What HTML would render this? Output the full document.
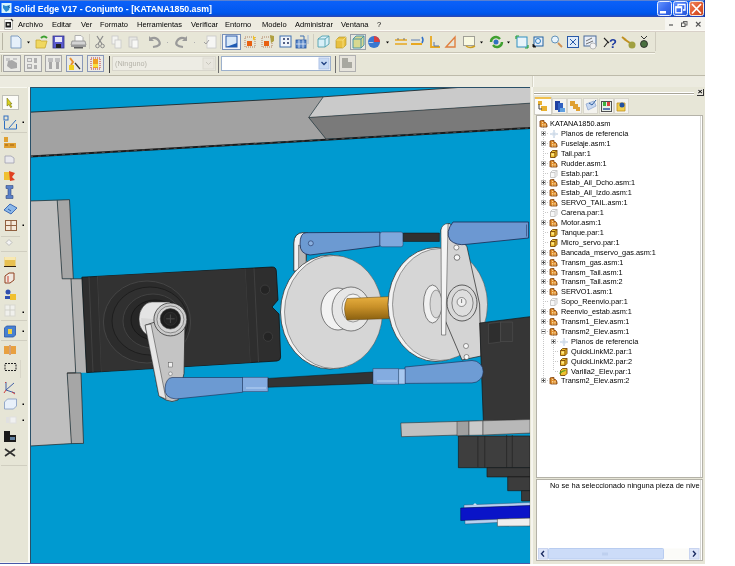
<!DOCTYPE html>
<html><head><meta charset="utf-8">
<style>
*{margin:0;padding:0;box-sizing:border-box}
html,body{width:735px;height:566px;overflow:hidden;background:#fff;font-family:"Liberation Sans",sans-serif}
.a{position:absolute}
#win{filter:blur(0.35px);position:absolute;left:0;top:0;width:705px;height:564px;background:#E7E6D7;overflow:hidden}
#title{left:0;top:0;width:705px;height:17px;background:linear-gradient(#5A80D0 0,#5A80D0 1px,#0A62F8 1px,#0A5EF6 4px,#0058F0 12px,#0050E0 15px,#2848B8 16px,#2848B8 17px)}
#title .t{left:14px;top:4px;color:#fff;font-weight:bold;font-size:8.75px;white-space:nowrap;line-height:10px}
#menu{left:0;top:17px;width:705px;height:14px;background:#EDEBE0}
#menu span{position:absolute;top:3px;font-size:7.5px;line-height:9px;color:#000;white-space:nowrap}
.btn{position:absolute;border:1px solid #A6A6A6;background:#EAEAE6}
.hb{position:absolute;border:1px solid #8AA0C0;background:#F4F2EA}
.sep{position:absolute;width:1px;background:#C0BDB0}
.tr{position:absolute;font-size:7.33px;line-height:9px;white-space:nowrap;color:#000}
</style></head><body>
<div id="win">
  <div id="title" class="a">
    <svg class="a" style="left:1px;top:3px" width="11" height="10" viewBox="0 0 11 10"><rect x="0.5" y="0" width="10" height="10" fill="#D8F4FC"/><path d="M2 2l3 1 4-1-1 5-3 2-3-4z" fill="#2A8AD0"/><path d="M7 3l1.5 2" stroke="#1A5A80" stroke-width="1"/></svg>
    <div class="a t">Solid Edge V17 - Conjunto - [KATANA1850.asm]</div>
    <svg class="a" style="left:654px;top:0" width="51" height="17" viewBox="654 0 51 17">
      <defs><linearGradient id="bb" x1="0" y1="0" x2="1" y2="1"><stop offset="0" stop-color="#6A98FF"/><stop offset="0.5" stop-color="#3A6CF0"/><stop offset="1" stop-color="#2858D8"/></linearGradient>
      <linearGradient id="rb" x1="0" y1="0" x2="1" y2="1"><stop offset="0" stop-color="#F08860"/><stop offset="0.5" stop-color="#E25A30"/><stop offset="1" stop-color="#C84018"/></linearGradient></defs>
      <rect x="657.5" y="1.5" width="14" height="14" rx="2" fill="url(#bb)" stroke="#E8F0FF"/>
      <rect x="660" y="11" width="6" height="2.5" fill="#fff"/>
      <rect x="673.5" y="1.5" width="14" height="14" rx="2" fill="url(#bb)" stroke="#E8F0FF"/>
      <path d="M678 6V4.5H685V10H683" stroke="#fff" stroke-width="1.3" fill="none"/>
      <rect x="675.8" y="6.8" width="5.8" height="6" fill="none" stroke="#fff" stroke-width="1.3"/>
      <path d="M675.8 7.5h5.8" stroke="#fff" stroke-width="1.6"/>
      <rect x="689.5" y="1.5" width="14" height="14" rx="2" fill="url(#rb)" stroke="#F4E8E0"/>
      <path d="M692 4L701 13.5M701 4L692 13.5" stroke="#fff" stroke-width="1.8"/>
      <rect x="704" y="0" width="1" height="17" fill="#1838A0"/>
    </svg>
  </div>
  <div id="menu" class="a">
    <svg class="a" style="left:3px;top:1px" width="11" height="13" viewBox="3 18 11 13"><path d="M4.5 19.5h7l1 1v9h-8z" fill="#FAFAF8" stroke="#B8B8B0"/><rect x="5.5" y="22" width="5.5" height="5.5" fill="#1A1A1A"/><rect x="7" y="23.5" width="2.5" height="2" fill="#E8E8E0"/><path d="M11 19l2 2" stroke="#333" stroke-width="1.2"/></svg>
    <span style="left:18px">Archivo</span>
    <span style="left:52px">Editar</span>
    <span style="left:81px">Ver</span>
    <span style="left:100px">Formato</span>
    <span style="left:137px">Herramientas</span>
    <span style="left:191px">Verificar</span>
    <span style="left:225px">Entorno</span>
    <span style="left:262px">Modelo</span>
    <span style="left:295px">Administrar</span>
    <span style="left:341px">Ventana</span>
    <span style="left:377px">?</span>
    <div class="a" style="left:665px;top:0;width:40px;height:14px;background:#F6F5F0"></div>
    <svg class="a" style="left:665px;top:0" width="40" height="14" viewBox="665 17 40 14">
      <path d="M669 25h4" stroke="#555" stroke-width="1.2"/>
      <rect x="683.5" y="21.5" width="3.5" height="3.5" fill="none" stroke="#666"/>
      <rect x="681.5" y="23" width="3.5" height="3.5" fill="#F6F5F0" stroke="#555"/>
      <path d="M696 22l4.5 4.5M700.5 22l-4.5 4.5" stroke="#555" stroke-width="1.1"/>
    </svg>
  </div>
  <!-- toolbar rows -->
  <div class="a" style="left:0;top:30px;width:705px;height:1px;background:#FBFAF4"></div>
  <div class="a" style="left:0;top:31px;width:705px;height:1px;background:#D8D0C8"></div>
  <div class="a" style="left:0;top:52px;width:655px;height:1px;background:#C8C5B6"></div>
  <div class="a" style="left:0;top:53px;width:655px;height:1px;background:#FAF9F0"></div>
  <div class="a" style="left:655px;top:32px;width:1px;height:19px;background:#CFCCBE"></div>
  <div class="a" style="left:0;top:75px;width:705px;height:1px;background:#BDBAAA"></div>
  <div class="a" style="left:0;top:76px;width:705px;height:11px;background:#ECEBE0"></div>
  <div class="a" style="left:533px;top:76px;width:1px;height:11px;background:#FAFAF4"></div>
  <div class="a" style="left:532px;top:76px;width:1px;height:11px;background:#D8D6C8"></div>
  <div class="a" style="left:2px;top:33px;width:1px;height:17px;background:#B8B5A5"></div>
  <svg class="a" style="left:0;top:31px" width="660" height="21" viewBox="0 31 660 21">
    <!-- new -->
    <path d="M11 36h7l3 3v9h-10z" fill="#E6F0FA" stroke="#7E9CC0" stroke-width="1"/>
    <path d="M27 41.5h3l-1.5 2z" fill="#000"/>
    <!-- open -->
    <path d="M36 40h4l1 1h6l-2 7h-9z" fill="#F0D860" stroke="#C8A830" stroke-width="0.8"/>
    <path d="M41 38q3-3 6 0" stroke="#3CA030" stroke-width="2" fill="none"/>
    <!-- save -->
    <rect x="53" y="36" width="11" height="12" fill="#5A5ACC" stroke="#33338A" stroke-width="0.8"/>
    <rect x="55" y="37" width="7" height="5" fill="#E8E8F8"/>
    <rect x="56" y="44" width="5" height="4" fill="#222"/>
    <!-- print -->
    <path d="M75 35.5h6l2 2v4h-8z" fill="#FAFAFA" stroke="#A0A0A0" stroke-width="0.8"/>
    <path d="M72 41h13l1 4h-15z" fill="#D4D4D4" stroke="#8A8A8A" stroke-width="0.8"/>
    <path d="M71 45h15v2h-15z" fill="#9A9A9A"/>
    <rect x="74" y="47" width="9" height="1.5" fill="#606060"/>
    <rect x="89" y="34" width="1" height="15" fill="#D0CDC0"/>
    <!-- cut -->
    <path d="M97 36l5 8M103 36l-5 8" stroke="#8A8A8A" stroke-width="1.2"/>
    <circle cx="97.5" cy="46" r="1.8" fill="none" stroke="#8A8A8A"/>
    <circle cx="102.5" cy="46" r="1.8" fill="none" stroke="#8A8A8A"/>
    <!-- copy -->
    <rect x="112" y="36" width="6" height="8" fill="#F4F4F0" stroke="#C8C8C8" stroke-width="0.8"/>
    <rect x="115" y="40" width="6" height="8" fill="#F4F4F0" stroke="#C8C8C8" stroke-width="0.8"/>
    <!-- paste -->
    <rect x="129" y="37" width="8" height="10" fill="#E8E8E4" stroke="#C0C0C0" stroke-width="0.8"/>
    <rect x="132" y="40" width="6" height="8" fill="#F8F8F6" stroke="#C8C8C8" stroke-width="0.8"/>
    <!-- undo -->
    <path d="M150 39q6-3 9 2t-6 6" stroke="#9A9A9A" stroke-width="2.2" fill="none"/>
    <path d="M149 36v5h5z" fill="#9A9A9A"/>
    <rect x="167" y="42" width="1" height="1" fill="#B0B0B0"/>
    <!-- redo -->
    <path d="M186 39q-6-3-9 2t6 6" stroke="#9A9A9A" stroke-width="2.2" fill="none"/>
    <path d="M187 36v5h-5z" fill="#9A9A9A"/>
    <rect x="194" y="42" width="1" height="1" fill="#B0B0B0"/>
    <!-- doc check -->
    <rect x="207" y="36" width="9" height="12" fill="#F6F6F4" stroke="#C8C8C8" stroke-width="0.8"/>
    <path d="M204 42l2 2 3-4" stroke="#A0A0A0" fill="none"/>
    <rect x="220" y="34" width="1" height="15" fill="#D0CDC0"/>
    <!-- highlighted -->
    <rect x="222.5" y="34.5" width="18" height="15" fill="#F2F4F8" stroke="#7890B8"/>
    <rect x="226" y="36" width="11" height="11" fill="#D8E8F8" stroke="#2858A8" stroke-width="1"/>
    <path d="M226 47h11v-4z" fill="#1E5AB4"/>
    <!-- A -->
    <rect x="245" y="37" width="10" height="10" fill="none" stroke="#B08060" stroke-dasharray="1 1"/>
    <rect x="247" y="41" width="5" height="5" fill="#E86010"/>
    <path d="M253 35l1 2 2 0-1.5 1.5.5 2-2-1" fill="#F0C020"/>
    <!-- B -->
    <rect x="262" y="37" width="10" height="10" fill="none" stroke="#B08060" stroke-dasharray="1 1"/>
    <rect x="264" y="41" width="5" height="5" fill="#E86010"/>
    <path d="M270 35l4 1v5l-3 2z" fill="#B0A040"/>
    <!-- C -->
    <rect x="280" y="36" width="11" height="11" fill="#F0F4FA" stroke="#4070B0"/>
    <path d="M283 39h2M287 39h2M283 43h2M287 43h2" stroke="#203060" stroke-width="1.5"/>
    <!-- D -->
    <rect x="296" y="40" width="10" height="8" fill="#5A88C8" stroke="#2050A0" stroke-width="0.8"/>
    <path d="M299 40v8M303 40v8M296 44h10" stroke="#E8F0FA" stroke-width="0.8"/>
    <path d="M300 36h4v4" stroke="#4070B0" fill="none"/>
    <path d="M308 35v9" stroke="#A0B8D8"/>
    <rect x="313" y="34" width="1" height="15" fill="#D0CDC0"/>
    <!-- E -->
    <path d="M318 39l4-3h7v8l-4 3h-7z" fill="#D8F0F8" stroke="#50A0B0" stroke-width="0.9"/>
    <path d="M318 39h7v8M325 39l4-3" stroke="#50A0B0" fill="none" stroke-width="0.9"/>
    <!-- F -->
    <path d="M336 40l3-3h7v8l-3 3h-7z" fill="#E8C040" stroke="#B09020" stroke-width="0.6"/>
    <path d="M343 40v8M336 40h7l3-3" stroke="#FFF0A0" fill="none" stroke-width="0.6"/>
    <!-- highlighted cube -->
    <rect x="350.5" y="34.5" width="15" height="15" fill="#E8E8E0" stroke="#9AA0A8"/>
    <path d="M353 39l3-3h8v9l-3 3h-8z" fill="#D8D890" stroke="#4090A8" stroke-width="0.9"/>
    <path d="M353 39h8v9M361 39l3-3" stroke="#4090A8" fill="none" stroke-width="0.9"/>
    <!-- sphere -->
    <circle cx="374" cy="42" r="6" fill="#3A78D0"/>
    <path d="M374 36a6 6 0 0 1 6 6h-6z" fill="#D84040"/>
    <path d="M374 42a6 6 0 0 1-6 0z" fill="#E0E8F8"/>
    <path d="M386 41.5h3l-1.5 2z" fill="#000"/>
    <!-- dim1 -->
    <path d="M395 40h12M395 44h12" stroke="#E8A820" stroke-width="1.6"/>
    <path d="M398 38v2M404 38v2" stroke="#777" />
    <!-- dim2 -->
    <path d="M411 44h11" stroke="#E8A820" stroke-width="2"/>
    <path d="M411 40h9" stroke="#6080B0" stroke-width="1"/>
    <path d="M422 37q2 3 0 6" stroke="#3070C8" stroke-width="1.5" fill="none"/>
    <!-- L -->
    <path d="M431 36v11h9" stroke="#E8A820" stroke-width="1.8" fill="none"/>
    <path d="M434 42v4h5" stroke="#5878A8" fill="none"/>
    <!-- triangle -->
    <path d="M446 47l9-10v10z" fill="none" stroke="#E08040" stroke-width="1.4"/>
    <!-- dotted -->
    <rect x="463.5" y="36.5" width="11" height="9" fill="#F8F8E0" stroke="#505050" stroke-dasharray="1 1"/>
    <path d="M466 46q4 3 9 0" stroke="#D0A020" stroke-width="1.5" fill="none"/>
    <path d="M480 41.5h3l-1.5 2z" fill="#000"/>
    <!-- rotate -->
    <path d="M491 42a5 5 0 0 1 9-3" stroke="#40A030" stroke-width="2.4" fill="none"/>
    <path d="M502 42a5 5 0 0 1-9 3" stroke="#40A030" stroke-width="2.4" fill="none"/>
    <circle cx="496" cy="42" r="2.5" fill="#3070C0"/>
    <path d="M507 41.5h3l-1.5 2z" fill="#000"/>
    <!-- fit -->
    <rect x="517" y="37" width="10" height="10" fill="#E8F4FA" stroke="#3090C0"/>
    <path d="M516 36l3 0M516 36v3M528 48h-3M528 48v-3" stroke="#20A040" stroke-width="1.2"/>
    <!-- zoom area -->
    <rect x="534" y="37" width="9" height="9" fill="#E8F0F8" stroke="#2060A0"/>
    <circle cx="538" cy="41" r="2.5" fill="none" stroke="#3080C0"/>
    <path d="M533 44v3h3" stroke="#222"/>
    <!-- zoom -->
    <circle cx="555" cy="39.5" r="3.5" fill="#E8F4FC" stroke="#6090B8"/>
    <path d="M558 43l4 4" stroke="#D09050" stroke-width="1.8"/>
    <!-- zoom all -->
    <rect x="567.5" y="36.5" width="11" height="11" fill="#E0ECF8" stroke="#2A5AA8"/>
    <path d="M570 39l6 6M576 39l-6 6" stroke="#2A5AA8"/>
    <!-- view -->
    <rect x="584" y="36" width="12" height="10" fill="#E8EEF6" stroke="#4A6A9A"/>
    <path d="M586 41l6-3M586 44l7-3" stroke="#707070"/>
    <circle cx="593" cy="46" r="3" fill="#F4F4F4" stroke="#999" stroke-width="0.6"/>
    <!-- help -->
    <path d="M604 38l5 5M604 47l4-5" stroke="#222" stroke-width="1.1"/>
    <text x="609" y="48" font-family="Liberation Sans" font-weight="bold" font-size="13" fill="#1E3CA0">?</text>
    <!-- tool -->
    <path d="M622 37l4 3M624 39l6 4" stroke="#C09020" stroke-width="2"/>
    <circle cx="632" cy="45" r="3.5" fill="#A0A040"/>
    <!-- last -->
    <path d="M641 36l3 3 3-3" stroke="#333" fill="none"/>
    <circle cx="644" cy="44" r="3.5" fill="#4A7040" stroke="#222" stroke-width="0.8"/>
  </svg>
  <!-- row 2 -->
  <div class="a" style="left:1px;top:55px;width:1px;height:17px;background:#B8B5A5"></div>
  <div class="btn" style="left:3px;top:55px;width:18px;height:17px"></div>
  <div class="btn" style="left:24px;top:55px;width:18px;height:17px"></div>
  <div class="btn" style="left:45px;top:55px;width:17px;height:17px"></div>
  <div class="btn" style="left:66px;top:55px;width:17px;height:17px;border-color:#8A98B8"></div>
  <div class="btn" style="left:87px;top:55px;width:17px;height:17px;border-color:#8A98B8"></div>
  <svg class="a" style="left:0;top:52px" width="360" height="23" viewBox="0 52 360 23">
    <path d="M6 58h4v3h-4zM13 58h4v2h-4z" fill="#C8C8C8"/>
    <path d="M8 61l4-1 5 3v5l-6 1-4-3z" fill="#A8A8A8"/>
    <path d="M27 58h5v4h-5zM34 58h3v5h-3zM27 64h5v5h-5zM34 65h3v4h-3z" fill="#B0B0B0"/>
    <path d="M28 59h3v2h-3zM28 65h3v2h-3z" fill="#E4E4E4"/>
    <path d="M48 58h5v4h-5zM55 58h5v4h-5z" fill="#C0C0C0"/>
    <path d="M49 62h3v7h-3zM56 62h3v7h-3z" fill="#A8A8A8"/>
    <path d="M70 58l3 4-2 3" stroke="#E89030" stroke-width="2" fill="none"/>
    <rect x="69" y="65" width="5" height="5" fill="#F0D020"/>
    <path d="M75 63l5 6" stroke="#333" stroke-width="1.2"/>
    <rect x="91" y="58" width="9" height="11" fill="none" stroke="#C03030" stroke-dasharray="1 1"/>
    <rect x="93" y="59" width="5" height="9" fill="#F0A020"/>
    <rect x="93" y="64" width="5" height="3" fill="#F8E040"/>
    <rect x="109" y="56" width="1" height="17" fill="#404040"/>
    <!-- combo disabled -->
    <rect x="112.5" y="56.5" width="103" height="14" fill="#EDECE4" stroke="#D8D6CC"/>
    <text x="115" y="66" font-family="Liberation Sans" font-size="7.3" fill="#B4B2A8">(Ninguno)</text>
    <rect x="203" y="58" width="11" height="11" fill="#E8E6DE" stroke="#DCDAD0"/>
    <path d="M206 62l2.5 2.5 2.5-2.5" stroke="#C8C6BC" fill="none"/>
    <rect x="218" y="56" width="1" height="17" fill="#707070"/>
    <!-- combo white -->
    <rect x="221.5" y="56.5" width="109" height="14" fill="#FFFFFF" stroke="#9CB0CC"/>
    <rect x="319" y="58" width="10" height="11" fill="#C8DAF4" stroke="#B0C4E8"/>
    <path d="M321.5 62l2.5 2.5 2.5-2.5" stroke="#204080" stroke-width="1.3" fill="none"/>
    <rect x="335" y="56" width="1" height="17" fill="#707070"/>
    <rect x="339.5" y="55.5" width="16" height="16" fill="#E6E4DC" stroke="#B0B0B0"/>
    <path d="M342 58h6v4h4v6h-10z" fill="#A8A8A0"/>
  </svg>


  <!-- left toolbar -->
  <div class="a" style="left:0;top:87px;width:28px;height:476px;background:#E6E5D6"></div>
  <div class="a" style="left:28px;top:87px;width:2px;height:476px;background:#FAFAF4"></div>
  <div class="a" style="left:0;top:562px;width:28px;height:1px;background:#F4F4F0"></div>
  <div class="a" style="left:0;top:563px;width:705px;height:1px;background:#4858A8"></div>
  <svg class="a" style="left:0;top:87px" width="28" height="476" viewBox="0 87 28 476">
    <path d="M0 87.5h27" stroke="#F8F8F0"/>
    <rect x="2.5" y="95.5" width="16" height="14" fill="#FCFCF8" stroke="#C0C0B8"/>
    <path d="M7 98l5 6-2 0 2 3-1.5 .5-1.5-3-2 1.5z" fill="#D8D020" stroke="#606000" stroke-width="0.5"/>
    <rect x="4" y="116" width="4" height="4" fill="none" stroke="#3070C0"/>
    <path d="M4.5 121v8h12v-5M9 128l7-8" stroke="#3070C0" stroke-width="1" fill="none"/>
    <rect x="22.5" y="121.5" width="1.5" height="1.5" fill="#000"/>
    <path d="M1 132.5h26" stroke="#D0CEC0"/>
    <path d="M4 137h4v5h-4zM4 143h12v5h-12z" fill="#E0A030"/>
    <path d="M5 145h3M10 145h4" stroke="#A06010" stroke-width="1"/>
    <path d="M5 156h6l3 2v5h-9z" fill="#E8E8EC" stroke="#A0A0B0" stroke-width="0.8"/>
    <path d="M4 172h7v8h-7z" fill="#F0C030"/>
    <path d="M9 171l6 2-3 4 3 3-5 1z" fill="#E04020"/>
    <path d="M6 185.5h7v3h-2v7h2v3h-7v-3h2v-7h-2z" fill="#5A80C8" stroke="#304880" stroke-width="0.6"/>
    <path d="M4 210l6-6 7 4-6 6z" fill="#8CB8E8" stroke="#3060B0" stroke-width="0.9"/>
    <path d="M8 209l3 2" stroke="#3060B0"/>
    <rect x="5.5" y="220.5" width="11" height="10" fill="#F4E8D8" stroke="#906040"/>
    <path d="M11 220.5v10M5.5 225.5h11" stroke="#906040"/>
    <rect x="22.5" y="224.5" width="1.5" height="1.5" fill="#000"/>
    <path d="M1 236.5h19" stroke="#D0CEC0"/>
    <path d="M6 242.5l3-3 3 3-3 3z" fill="#F4F4F4" stroke="#B0B0B0" stroke-width="0.8"/>
    <path d="M1 251.5h26" stroke="#D0CEC0"/>
    <rect x="4.5" y="257" width="11" height="9" fill="#E8C050"/>
    <rect x="4.5" y="257" width="11" height="3" fill="#F8E8B0"/>
    <path d="M4 266.5h12" stroke="#302010" stroke-width="1"/>
    <path d="M5 276l4-3h5v7l-4 3h-5z" fill="#F0E8E0" stroke="#904020" stroke-width="1"/>
    <path d="M8 276v6" stroke="#D04030"/>
    <circle cx="8" cy="292" r="2.5" fill="#3050B0"/>
    <path d="M5 296h5v3h-5z" fill="#3050B0"/>
    <rect x="10" y="294" width="6" height="6" fill="#F0C030"/>
    <rect x="5" y="305" width="10" height="11" fill="#F0F0EC" stroke="#D8D8D0"/>
    <path d="M10 305v11M5 310h10" stroke="#D0D0C8"/>
    <rect x="22.5" y="311.5" width="1.5" height="1.5" fill="#000"/>
    <path d="M1 320.5h26" stroke="#D0CEC0"/>
    <path d="M4.5 328l2-2h9v9l-2 2h-9z" fill="#4880D0" stroke="#2858A8" stroke-width="0.8"/>
    <rect x="8" y="329" width="4" height="5" fill="#F0D040"/>
    <rect x="22.5" y="330.5" width="1.5" height="1.5" fill="#000"/>
    <path d="M1 340.5h26" stroke="#D0CEC0"/>
    <path d="M4 346h5v8h-5zM11 346h5v8h-5z" fill="#E8A040"/>
    <path d="M10 345v10" stroke="#C06020"/>
    <rect x="5" y="363.5" width="11" height="7" fill="none" stroke="#202020" stroke-dasharray="2 1" stroke-width="1"/>
    <path d="M20.5 360v18" stroke="#D8D6C8"/>
    <path d="M6 382v8l9 3M6 390l8-7" stroke="#3050A0" stroke-width="0.9" fill="none"/>
    <path d="M6 390l-2 3M12 392l3 2M6 382l-1 1" stroke="#D04040" stroke-width="1"/>
    <path d="M4.5 402l3-3h9v7l-3 3h-9z" fill="#E8F0FA" stroke="#8098C0" stroke-width="0.8"/>
    <rect x="22.5" y="403.5" width="1.5" height="1.5" fill="#000"/>
    <rect x="6" y="417" width="3" height="6" fill="#E0E0E0"/>
    <rect x="10" y="417" width="6" height="6" fill="#F0F0F0" stroke="#E0E0E0"/>
    <rect x="22.5" y="419.5" width="1.5" height="1.5" fill="#000"/>
    <path d="M4 431h6v4h6v7h-12z" fill="#1A1A1A"/>
    <rect x="10" y="437" width="5" height="3" fill="#6080A0"/>
    <path d="M5 449l10 7M5 456l10-7" stroke="#303030" stroke-width="1.6"/>
    <path d="M1 465.5h26" stroke="#D0CEC0"/>
  </svg>
  <!-- viewport -->
  <svg class="a" style="left:30px;top:87px" width="500" height="476" viewBox="30 87 500 476">
    <rect x="30" y="87" width="500" height="476" fill="#009AD0"/>
    <!-- top beam -->
    <polygon points="30,112.2 323.3,96.8 308.7,117.5 326,139 30,156.4" fill="#A2A2A2"/>
    <polygon points="323.3,96.8 465,87 530,87 530,103.2 308.7,117.5" fill="#CACACA"/>
    <polygon points="308.7,117.5 530,103.2 530,127.7 326,139" fill="#7A7A7A"/>
    <path d="M30 112.2L323.3 96.8L465 87" stroke="#1A1A1A" stroke-width="0.8" fill="none"/>
    <path d="M30 156.6L530 128" stroke="#1A1A1A" stroke-width="2" fill="none"/>
    <path d="M30 156.6L530 128" stroke="#707070" stroke-width="0.6" stroke-dasharray="3 5" fill="none"/>
    <path d="M323.3 96.8L308.7 117.5L326 139M308.7 117.5L530 103.2" stroke="#303030" stroke-width="0.7" fill="none"/>
    <!-- left structure -->
    <polygon points="30,201 57.2,200.3 62.2,278.8 71,278.8 75.7,372.8 67.2,373 71.4,443.6 30,446" fill="#BFBFBF"/>
    <polygon points="57.2,200.3 69.5,199.7 73.3,278.8 62.2,278.8" fill="#A6A6A6"/>
    <polygon points="71,278.8 82,278.8 86.6,372.8 75.7,372.8" fill="#B2B2B2"/>
    <polygon points="67.2,373 81,373 83.5,443.4 71.4,443.6" fill="#A6A6A6"/>
    <path d="M30 201L69.5 199.7L73.3 278.8M57.2 200.3L62.2 278.8H82M71 278.8L75.7 372.8L67.2 373L71.4 443.6L30 446M67.2 373H81L83.5 443.4L71.4 443.6" stroke="#222" stroke-width="0.7" fill="none"/>
    <!-- servo body -->
    <path d="M81.9 277.2L272 267Q276 266.9 276.3 271L278 300L272 307L279 314L280.6 357Q280.8 360.5 277 361L86.6 372.6Z" fill="#2E2E2E" stroke="#111" stroke-width="0.8"/>
    <path d="M89 276.8L93 372M97.6 276.3L101.5 371.5M245 268.7L250 362.5M254 268.3L258.5 362" stroke="#484848" stroke-width="0.7"/>
    <path d="M98 276.3L245 268.7L250 362.5L101.5 371.5Z" fill="#323232"/>
    <circle cx="265" cy="289.7" r="4.6" fill="#242424" stroke="#484848" stroke-width="0.6"/>
    <circle cx="268" cy="336.7" r="4.6" fill="#242424" stroke="#484848" stroke-width="0.6"/>
    <ellipse cx="147" cy="322" rx="43.6" ry="41" fill="#2C2C2C" stroke="#4A4A4A" stroke-width="0.8"/>
    <ellipse cx="150" cy="321" rx="38" ry="34" fill="#303030" stroke="#1A1A1A" stroke-width="0.8"/>
    <ellipse cx="153" cy="321" rx="30" ry="27" fill="#2A2A2A" stroke="#484848" stroke-width="0.8"/>
    <ellipse cx="155" cy="320" rx="24" ry="20" fill="#262626" stroke="#151515" stroke-width="0.8"/>
    <!-- hub cylinder -->
    <path d="M152 302H170V336H152A13 17 0 0 1 152 302Z" fill="#E4E4E4" stroke="#333" stroke-width="0.5"/>
    <path d="M141 318Q141 330 150 335H165V320Z" fill="#D0D0D0" opacity="0.6"/>
    <!-- horn arm -->
    <path d="M145.2 325.2L155 322L185 322L184 373.5L178 400Q172 403 166 400L159 396Z" fill="#C4C4C4" stroke="#222" stroke-width="0.7"/>
    <path d="M145.2 325.2L151 324L166 399L159 396Z" fill="#E6E6E6" stroke="#333" stroke-width="0.5"/>
    <rect x="168.7" y="372" width="3.5" height="3.5" rx="1.5" fill="#F0F0F0" stroke="#444" stroke-width="0.4"/>
    <circle cx="170.4" cy="319.4" r="16.5" fill="#CACACA" stroke="#222" stroke-width="0.7"/>
    <circle cx="170.4" cy="319.4" r="13.5" fill="#D4D4D4" stroke="#555" stroke-width="0.6"/>
    <circle cx="170.4" cy="318.8" r="10.2" fill="#1E1E1E" stroke="#444" stroke-width="0.6"/>
    <circle cx="170.4" cy="318.8" r="6.5" fill="#242424" stroke="#3A3A3A" stroke-width="0.5"/>
    <path d="M170.4 314.5v8.5M166.2 318.8h8.5" stroke="#4A4A4A" stroke-width="1"/>
    <rect x="168.7" y="362.8" width="3.5" height="4.2" fill="#F0F0F0" stroke="#444" stroke-width="0.4"/>
    <!-- lower link left -->
    <path d="M172 377.5L242.7 377.5L242.7 392.2L176 399Q164 398 165 388Q166 378 172 377.5Z" fill="#6C9AD2" stroke="#1A2A50" stroke-width="0.6"/>
    <rect x="242.7" y="377.2" width="25.3" height="14.5" fill="#84ACE0" stroke="#2A3A60" stroke-width="0.5"/>
    <path d="M246 388h20" stroke="#B8D4F4" stroke-width="1"/>
    <polygon points="268,378.4 372.9,372 372.9,383.4 268,387.3" fill="#333" stroke="#111" stroke-width="0.5"/>
    <!-- left bracket -->
    <path d="M293.8 271V243Q294 233 303.3 232.5L308 233L306 262L298.6 271Z" fill="#F2F2F2" stroke="#222" stroke-width="0.8"/>
    <path d="M298.6 271V245L306 248V262Z" fill="#B8B8B8" stroke="#333" stroke-width="0.5"/>
    <!-- left pulley -->
    <ellipse cx="330" cy="312" rx="49.5" ry="57" fill="#F2F2F2" stroke="#222" stroke-width="0.7"/>
    <ellipse cx="333.5" cy="312" rx="49" ry="56.5" fill="#D6D6D6" stroke="#444" stroke-width="0.5"/>
    <!-- hub left -->
    <ellipse cx="338" cy="309" rx="17" ry="21" fill="#F2F2F2" stroke="#333" stroke-width="0.6"/>
    <ellipse cx="351" cy="309" rx="19" ry="22" fill="#E6E6E6" stroke="#333" stroke-width="0.6"/>
    <ellipse cx="353" cy="308" rx="11" ry="14" fill="#F6F6F6" stroke="#555" stroke-width="0.6"/>
    <!-- brass shaft -->
    <defs>
      <linearGradient id="brass" x1="0" y1="0" x2="0" y2="1">
        <stop offset="0" stop-color="#E8B040"/><stop offset="0.45" stop-color="#C89028"/><stop offset="1" stop-color="#8A6010"/>
      </linearGradient>
    </defs>
    <path d="M347 298.5L392 296.5V318.5L347 320Q342 309 347 298.5Z" fill="url(#brass)" stroke="#5A4010" stroke-width="0.5"/>
    <!-- top link left -->
    <path d="M306 232.7L380 232.2L380 246L310 255Q300 254 300 244Q300 233 306 232.7Z" fill="#6C9AD2" stroke="#1A2A50" stroke-width="0.8"/>
    <circle cx="310.8" cy="243.3" r="2.5" fill="#8AB0E0" stroke="#203060" stroke-width="0.6"/>
    <rect x="380" y="232" width="23" height="14.8" rx="2" fill="#80A8DC" stroke="#2A3A60" stroke-width="0.5"/>
    <polygon points="403.3,233 439.4,233 439.4,241.5 403.3,241.5" fill="#303030" stroke="#111" stroke-width="0.5"/>
    <!-- right pulley -->
    <ellipse cx="436" cy="304.5" rx="48" ry="57" fill="#F2F2F2" stroke="#222" stroke-width="0.7"/>
    <ellipse cx="440" cy="304.5" rx="47.5" ry="56" fill="#D6D6D6" stroke="#444" stroke-width="0.5"/>
    <ellipse cx="432.5" cy="304" rx="9" ry="19" fill="#F0F0F0" stroke="#333" stroke-width="0.6"/>
    <ellipse cx="436" cy="304" rx="6" ry="14" fill="#D8D8D8" stroke="#555" stroke-width="0.5"/>
    <!-- right lever -->
    <path d="M441 230Q443 223.5 450 223.5L467 246.8L479.6 304L481 356L462 360L445 320Z" fill="#D4D4D4" stroke="#222" stroke-width="0.7"/>
    <path d="M441 230Q442 224 448 223.5L445.7 335L441.5 335Z" fill="#F4F4F4" stroke="#333" stroke-width="0.5"/>
    <circle cx="456.4" cy="247.5" r="2.5" fill="#F8F8F8" stroke="#333" stroke-width="0.5"/>
    <circle cx="457" cy="257.5" r="2.8" fill="#F8F8F8" stroke="#333" stroke-width="0.6"/>
    <ellipse cx="462" cy="303" rx="15" ry="18" fill="#D8D8D8" stroke="#222" stroke-width="0.7"/>
    <ellipse cx="462.5" cy="303" rx="10.6" ry="13.4" fill="#DEDEDE" stroke="#444" stroke-width="0.6"/>
    <circle cx="461.6" cy="302" r="4.5" fill="#F0F0F0" stroke="#333" stroke-width="0.5"/>
    <path d="M461.6 299v4" stroke="#333" stroke-width="0.6"/>
    <circle cx="466" cy="346" r="2.5" fill="#F8F8F8" stroke="#333" stroke-width="0.5"/>
    <circle cx="466.5" cy="357" r="2.5" fill="#F8F8F8" stroke="#333" stroke-width="0.5"/>
    <!-- top right arm -->
    <path d="M453 222L528.6 222V238L467 244.3Q456 246 450 240Q445 232 453 222Z" fill="#6C98D2" stroke="#1A2A50" stroke-width="0.8"/>
    <path d="M526.5 224.5v12" stroke="#2A3A60" stroke-width="0.6"/>
    <!-- right dark block -->
    <path d="M479.7 323L530 316.7V425H483.5Z" fill="#363636"/>
    <path d="M530 316.7L479.7 323L483.5 425" fill="none" stroke="#151515" stroke-width="0.7"/>
    <path d="M458.4 436H530V467.7H458.4Z" fill="#3E3E3E" stroke="#1A1A1A" stroke-width="0.7"/>
    <path d="M477.9 436.5V467M484.8 436V467.5M506.6 435V467.5M512.3 435V467.5" stroke="#222" stroke-width="0.7"/>
    <path d="M487 467.7H530V476.9H487Z" fill="#3A3A3A" stroke="#1A1A1A" stroke-width="0.7"/>
    <path d="M507.7 476.9H530V490.7H507.7Z" fill="#3C3C3C" stroke="#1A1A1A" stroke-width="0.7"/>
    <path d="M521.5 490.7H530V501H521.6Z" fill="#3A3A3A" stroke="#1A1A1A" stroke-width="0.7"/>
    <path d="M488.6 323.5l12-1.5v20l-12 1.5z" fill="#2E2E2E" stroke="#555" stroke-width="0.5"/>
    <path d="M500.6 322h12v19.5h-12z" fill="#383838" stroke="#555" stroke-width="0.5"/>
    <!-- gray rod -->
    <polygon points="400.8,423 530,419.5 530,433 401.5,436.7" fill="#C0C0C0" stroke="#333" stroke-width="0.6"/>
    <polygon points="457,421.5 469,421.2 469,435.3 457,435.7" fill="#A0A0A0" stroke="#333" stroke-width="0.5"/>
    <polygon points="469,421.2 483,420.8 483,435 469,435.3" fill="#CACACA" stroke="#333" stroke-width="0.5"/>
    <polygon points="483,420.8 530,419.5 530,433 483,435" fill="#B8B8B8" stroke="#333" stroke-width="0.5"/>
    <!-- lower right link -->
    <path d="M373 368.6H398.6V384.3H373Z" fill="#84ACE0" stroke="#2A3A60" stroke-width="0.5"/>
    <path d="M377 381h20" stroke="#B8D4F4" stroke-width="1"/>
    <path d="M405 367L472 360.5A11 11 0 0 1 472 382.9L405 383.4Z" fill="#6E9CD4" stroke="#1A2A50" stroke-width="0.6"/>
    <path d="M398.6 369H405V384H398.6Z" fill="#A8C8F0" stroke="#2A3A60" stroke-width="0.4"/>
    <!-- blue bar bottom -->
    <polygon points="464,505 530,502.5 530,506 464,508" fill="#B8D0F0" stroke="#2A4060" stroke-width="0.4"/>
    <path d="M473 505l2-2 2 2z" fill="#D0E0F0"/>
    <polygon points="460.7,508 530,505.5 530,519 460.7,520.5" fill="#0A14C8" stroke="#000050" stroke-width="0.5"/>
    <polygon points="465,520.5 530,518 530,521 465,524" fill="#B8D0F0" stroke="#2A4060" stroke-width="0.4"/>
    <polygon points="497.4,519 530,518.2 530,526 497.4,526.2" fill="#EEEEEE" stroke="#333" stroke-width="0.5"/>
    <path d="M30 563.5H530" stroke="#2058B0" stroke-width="1"/>
    <path d="M30.5 563V87.5H530" stroke="#2A5068" stroke-width="1" fill="none"/>
  </svg>
  <!-- right panel -->
  <div id="panel" class="a" style="left:530px;top:87px;width:175px;height:477px;background:#E7E6D7">
    <div class="a" style="left:1px;top:0;width:2px;height:477px;background:#F6F5EE"></div>
    <div class="a" style="left:4px;top:5px;width:160px;height:1px;background:#FFFFFF"></div>
    <div class="a" style="left:4px;top:6px;width:160px;height:1px;background:#A8A598"></div>
    <div class="a" style="left:4px;top:7px;width:160px;height:1px;background:#FFFFFF"></div>
    <div class="a" style="left:167px;top:2px;width:7px;height:7px;background:#E8E6DC;border-right:1px solid #333;border-bottom:1px solid #333;color:#000;font-size:8px;line-height:6px;text-align:center;font-weight:bold">×</div>
  </div>
  <div class="a" style="left:536px;top:115px;width:167px;height:363px;background:#fff;border:1px solid #B4B2A8"></div>
  <div class="a" style="left:700px;top:116px;width:1px;height:361px;background:#D8D8D4"></div>
  <div class="a" style="left:536px;top:479px;width:167px;height:82px;background:#fff;border:1px solid #B4B2A8"></div>
  <div class="a" style="left:700px;top:480px;width:1px;height:80px;background:#D8D8D4"></div>
  <svg class="a" style="left:530px;top:95px" width="110" height="20" viewBox="530 95 110 20">
    <rect x="534.5" y="97.5" width="17" height="17" fill="#FCFCFA" stroke="#D0CEC4"/>
    <rect x="535" y="97" width="16" height="2" fill="#F0C050"/>
    <rect x="552.5" y="98.5" width="14" height="15" fill="#F4F3EE" stroke="#D8D6CC"/>
    <rect x="567.5" y="98.5" width="14" height="15" fill="#F4F3EE" stroke="#D8D6CC"/>
    <rect x="583.5" y="98.5" width="14" height="15" fill="#F4F3EE" stroke="#D8D6CC"/>
    <rect x="599.5" y="98.5" width="14" height="15" fill="#F4F3EE" stroke="#D8D6CC"/>
    <rect x="614.5" y="98.5" width="14" height="15" fill="#F4F3EE" stroke="#D8D6CC"/>
    <path d="M538 101h4v4h-4zM541 106h6v5h-6z" fill="#E8B030"/>
    <path d="M539 104v5h3" stroke="#404040" fill="none"/>
    <path d="M555 101h5v9h-5z" fill="#2040A0"/>
    <path d="M558 103h5v9h-5z" fill="#3060C0"/>
    <path d="M560 108h5v4h-5z" fill="#60A0E0"/>
    <path d="M570 101h5v5h-5zM573 104h5v5h-5zM576 107h4v4h-4z" fill="#E0A030"/>
    <path d="M586 104l8-3 2 5-8 4z" fill="#C8D8F0" stroke="#90A8D0" stroke-width="0.8"/>
    <path d="M589 103l3 2 4-5" stroke="#3060A0" fill="none"/>
    <rect x="601.5" y="101.5" width="10" height="10" fill="#E8F0E8" stroke="#505050"/>
    <rect x="603" y="102" width="3" height="4" fill="#40B040"/>
    <rect x="607" y="102" width="3" height="4" fill="#E04040"/>
    <path d="M603 109h7" stroke="#3050A0" stroke-width="1.5"/>
    <path d="M617 103h8v8h-8z" fill="#F0D050" stroke="#C09020" stroke-width="0.8"/>
    <circle cx="622" cy="105" r="2.5" fill="#2050A0"/>
  </svg>
  <svg class="a" style="left:536px;top:115px" width="166" height="280" viewBox="536 115 166 280">
    <defs>
      <g id="iasm"><path d="M1.5 0.5h2.5v2h1.5l1 1v1h0.5v2.5h-6.5l-0.5-0.5v-5.5z" fill="#E09030" stroke="#7A3A08" stroke-width="0.8"/><path d="M2.2 2.5h1M2.2 4.5h1M4.5 4.5h1M2.2 6h1M4.5 6h1" stroke="#FFF0C8" stroke-width="0.9"/></g>
      <g id="ipar"><path d="M0.5 2.5l2-2h4.5v5l-2 2h-4.5z" fill="#F0C030" stroke="#7A4A08" stroke-width="0.9"/><path d="M0.5 2.5h4.5v5M5 2.5l2-2" stroke="#7A4A08" fill="none" stroke-width="0.9"/><path d="M1.5 3.5h2.5v2h-2.5z" fill="#FFE890"/></g>
      <g id="iparw"><path d="M0.5 2.5l2-2h4.5v5l-2 2h-4.5z" fill="#F8F8F8" stroke="#C4C4C4" stroke-width="0.9"/><path d="M0.5 2.5h4.5v5M5 2.5l2-2" stroke="#C4C4C4" fill="none" stroke-width="0.9"/></g>
      <g id="iparx"><path d="M0.5 2.5l2-2h4.5v5l-2 2h-4.5z" fill="#F0C030" stroke="#7A4A08" stroke-width="0.9"/><path d="M-0.5 5.5q3-3 6-3" stroke="#50A020" stroke-width="1.2" fill="none"/></g>
      <g id="iplane"><path d="M4 0v8M0 4h8" stroke="#A8C0D8" stroke-width="0.9"/><path d="M2.5 2.5l3 3M5.5 2.5l-3 3" stroke="#D0DCE8" stroke-width="0.8"/></g>
    </defs>
<path d="M543.5 127V380M553.5 335V371" stroke="#C8C8C8" stroke-dasharray="1 1"/>
<path d="M545 133.5h4M545 143.5h4M545 153.5h4M545 163.5h4M545 173.5h4M545 182.5h4M545 192.5h4M545 202.5h4M545 212.5h4M545 222.5h4M545 232.5h4M545 242.5h4M545 252.5h4M545 262.5h4M545 271.5h4M545 281.5h4M545 291.5h4M545 301.5h4M545 311.5h4M545 321.5h4M545 331.5h4M555 341.5h4M555 351.5h4M555 361.5h4M555 371.5h4M545 380.5h4" stroke="#C8C8C8" stroke-dasharray="1 1"/>
<use href="#iasm" x="540" y="120"/>
<rect x="541.5" y="131.5" width="4" height="4" fill="#fff" stroke="#C0C0C0"/><path d="M542 133.5h3" stroke="#505050"/><path d="M543.5 132v3" stroke="#505050"/>
<use href="#iplane" x="550" y="130"/>
<rect x="541.5" y="141.5" width="4" height="4" fill="#fff" stroke="#C0C0C0"/><path d="M542 143.5h3" stroke="#505050"/><path d="M543.5 142v3" stroke="#505050"/>
<use href="#iasm" x="550" y="140"/>
<use href="#ipar" x="550" y="150"/>
<rect x="541.5" y="161.5" width="4" height="4" fill="#fff" stroke="#C0C0C0"/><path d="M542 163.5h3" stroke="#505050"/><path d="M543.5 162v3" stroke="#505050"/>
<use href="#iasm" x="550" y="160"/>
<use href="#iparw" x="550" y="170"/>
<rect x="541.5" y="180.5" width="4" height="4" fill="#fff" stroke="#C0C0C0"/><path d="M542 182.5h3" stroke="#505050"/><path d="M543.5 181v3" stroke="#505050"/>
<use href="#iasm" x="550" y="179"/>
<rect x="541.5" y="190.5" width="4" height="4" fill="#fff" stroke="#C0C0C0"/><path d="M542 192.5h3" stroke="#505050"/><path d="M543.5 191v3" stroke="#505050"/>
<use href="#iasm" x="550" y="189"/>
<rect x="541.5" y="200.5" width="4" height="4" fill="#fff" stroke="#C0C0C0"/><path d="M542 202.5h3" stroke="#505050"/><path d="M543.5 201v3" stroke="#505050"/>
<use href="#iasm" x="550" y="199"/>
<use href="#iparw" x="550" y="209"/>
<rect x="541.5" y="220.5" width="4" height="4" fill="#fff" stroke="#C0C0C0"/><path d="M542 222.5h3" stroke="#505050"/><path d="M543.5 221v3" stroke="#505050"/>
<use href="#iasm" x="550" y="219"/>
<use href="#ipar" x="550" y="229"/>
<use href="#ipar" x="550" y="239"/>
<rect x="541.5" y="250.5" width="4" height="4" fill="#fff" stroke="#C0C0C0"/><path d="M542 252.5h3" stroke="#505050"/><path d="M543.5 251v3" stroke="#505050"/>
<use href="#iasm" x="550" y="249"/>
<rect x="541.5" y="260.5" width="4" height="4" fill="#fff" stroke="#C0C0C0"/><path d="M542 262.5h3" stroke="#505050"/><path d="M543.5 261v3" stroke="#505050"/>
<use href="#iasm" x="550" y="259"/>
<rect x="541.5" y="269.5" width="4" height="4" fill="#fff" stroke="#C0C0C0"/><path d="M542 271.5h3" stroke="#505050"/><path d="M543.5 270v3" stroke="#505050"/>
<use href="#iasm" x="550" y="268"/>
<rect x="541.5" y="279.5" width="4" height="4" fill="#fff" stroke="#C0C0C0"/><path d="M542 281.5h3" stroke="#505050"/><path d="M543.5 280v3" stroke="#505050"/>
<use href="#iasm" x="550" y="278"/>
<rect x="541.5" y="289.5" width="4" height="4" fill="#fff" stroke="#C0C0C0"/><path d="M542 291.5h3" stroke="#505050"/><path d="M543.5 290v3" stroke="#505050"/>
<use href="#iasm" x="550" y="288"/>
<use href="#iparw" x="550" y="298"/>
<rect x="541.5" y="309.5" width="4" height="4" fill="#fff" stroke="#C0C0C0"/><path d="M542 311.5h3" stroke="#505050"/><path d="M543.5 310v3" stroke="#505050"/>
<use href="#iasm" x="550" y="308"/>
<rect x="541.5" y="319.5" width="4" height="4" fill="#fff" stroke="#C0C0C0"/><path d="M542 321.5h3" stroke="#505050"/><path d="M543.5 320v3" stroke="#505050"/>
<use href="#iasm" x="550" y="318"/>
<rect x="541.5" y="329.5" width="4" height="4" fill="#fff" stroke="#C0C0C0"/><path d="M542 331.5h3" stroke="#505050"/>
<use href="#iasm" x="550" y="328"/>
<rect x="551.5" y="339.5" width="4" height="4" fill="#fff" stroke="#C0C0C0"/><path d="M552 341.5h3" stroke="#505050"/><path d="M553.5 340v3" stroke="#505050"/>
<use href="#iplane" x="560" y="338"/>
<use href="#ipar" x="560" y="348"/>
<use href="#ipar" x="560" y="358"/>
<use href="#iparx" x="560" y="368"/>
<rect x="541.5" y="378.5" width="4" height="4" fill="#fff" stroke="#C0C0C0"/><path d="M542 380.5h3" stroke="#505050"/><path d="M543.5 379v3" stroke="#505050"/>
<use href="#iasm" x="550" y="377"/>
  </svg>
<div class="tr" style="left:550px;top:119.0px">KATANA1850.asm</div>
<div class="tr" style="left:561px;top:128.9px">Planos de referencia</div>
<div class="tr" style="left:561px;top:138.8px">Fuselaje.asm:1</div>
<div class="tr" style="left:561px;top:148.7px">Tail.par:1</div>
<div class="tr" style="left:561px;top:158.6px">Rudder.asm:1</div>
<div class="tr" style="left:561px;top:168.5px">Estab.par:1</div>
<div class="tr" style="left:561px;top:178.4px">Estab_Ail_Dcho.asm:1</div>
<div class="tr" style="left:561px;top:188.3px">Estab_Ail_Izdo.asm:1</div>
<div class="tr" style="left:561px;top:198.2px">SERVO_TAIL.asm:1</div>
<div class="tr" style="left:561px;top:208.1px">Carena.par:1</div>
<div class="tr" style="left:561px;top:218.0px">Motor.asm:1</div>
<div class="tr" style="left:561px;top:227.9px">Tanque.par:1</div>
<div class="tr" style="left:561px;top:237.8px">Micro_servo.par:1</div>
<div class="tr" style="left:561px;top:247.7px">Bancada_mservo_gas.asm:1</div>
<div class="tr" style="left:561px;top:257.6px">Transm_gas.asm:1</div>
<div class="tr" style="left:561px;top:267.5px">Transm_Tail.asm:1</div>
<div class="tr" style="left:561px;top:277.4px">Transm_Tail.asm:2</div>
<div class="tr" style="left:561px;top:287.3px">SERVO1.asm:1</div>
<div class="tr" style="left:561px;top:297.2px">Sopo_Reenvio.par:1</div>
<div class="tr" style="left:561px;top:307.1px">Reenvio_estab.asm:1</div>
<div class="tr" style="left:561px;top:317.0px">Transm1_Elev.asm:1</div>
<div class="tr" style="left:561px;top:326.9px">Transm2_Elev.asm:1</div>
<div class="tr" style="left:571px;top:336.8px">Planos de referencia</div>
<div class="tr" style="left:571px;top:346.7px">QuickLinkM2.par:1</div>
<div class="tr" style="left:571px;top:356.6px">QuickLinkM2.par:2</div>
<div class="tr" style="left:571px;top:366.5px">Varilla2_Elev.par:1</div>
<div class="tr" style="left:561px;top:376.4px">Transm2_Elev.asm:2</div>
  <div class="tr" style="left:550px;top:481px;font-size:7.45px;width:150px;overflow:hidden">No se ha seleccionado ninguna pieza de nive</div>
  <!-- scrollbar -->
  <svg class="a" style="left:537px;top:547px" width="164" height="14" viewBox="537 547 164 14">
    <rect x="538" y="548.5" width="162" height="11" fill="#FBFBF8"/>
    <rect x="538.5" y="548.5" width="9" height="10.5" fill="#DCE4F8" stroke="#C8D4F0"/>
    <path d="M544 551l-2.5 2.8 2.5 2.8" stroke="#1A2A60" stroke-width="1.4" fill="none"/>
    <rect x="548.5" y="548.5" width="115" height="10.5" rx="1" fill="#CCDCF8" stroke="#B8CCF0"/>
    <path d="M603 552.5v3M605 552.5v3M607 552.5v3" stroke="#A8BCE0" stroke-width="0.8"/>
    <rect x="689.5" y="548.5" width="9.5" height="10.5" fill="#DCE4F8" stroke="#C8D4F0"/>
    <path d="M693 551l2.5 2.8-2.5 2.8" stroke="#1A2A60" stroke-width="1.4" fill="none"/>
  </svg>
</div>
</body></html>
